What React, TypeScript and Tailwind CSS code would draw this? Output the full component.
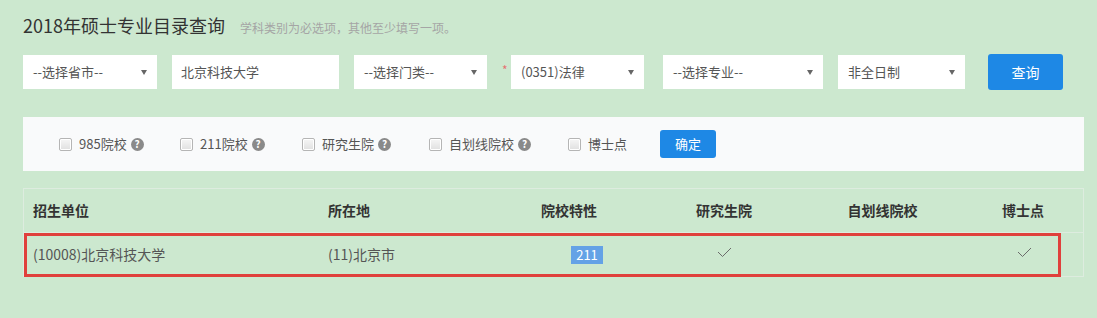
import React from "react";

const font = { fontFamily: '"Noto Sans CJK SC", "Noto Sans", sans-serif' };

function Arrow() {
  return (
    <svg width="6" height="5" viewBox="0 0 6 5" className="shrink-0">
      <path d="M0 0 L6 0 L3 5 Z" fill="#666" />
    </svg>
  );
}

function Select({ w, text, ml }: { w: string; text: string; ml?: string }) {
  return (
    <div
      className={`${w} ${ml ?? ""} h-[34px] bg-white flex items-center justify-between pl-[10px] pr-[10px] text-[13px] text-[#555]`}
    >
      <span>{text}</span>
      <Arrow />
    </div>
  );
}

function Check() {
  return (
    <span className="inline-block w-[13px] h-[13px] rounded-[2px] border border-[#b5b5b5] bg-gradient-to-b from-[#f6f6f6] to-[#e0e0e0] shadow-[inset_0_0_0_1px_#fff] shrink-0" />
  );
}

function Help() {
  return (
    <span className="ml-[4px] inline-flex w-[13px] h-[13px] rounded-full bg-[#8a8a8a] text-white text-[10px] font-bold items-center justify-center leading-none shrink-0">
      ?
    </span>
  );
}

function Opt({ w, label, help = true }: { w: string; label: string; help?: boolean }) {
  return (
    <div className={`${w} flex items-center shrink-0`}>
      <Check />
      <span className="ml-[7px] text-[13px] text-[#555]">{label}</span>
      {help && <Help />}
    </div>
  );
}

function Tick() {
  return (
    <svg width="15" height="11" viewBox="0 0 15 11" className="-mt-[4px]">
      <path d="M1 5 L5.5 9.5 L14 1" fill="none" stroke="#6b6b6b" strokeWidth="1" />
    </svg>
  );
}

export default function App() {
  return (
    <div style={font} className="min-h-[318px] w-full bg-[#cce8cf] pl-[23px] pt-[12px] pb-[20px]">
      <div className="flex items-baseline h-[26px]">
        <span className="text-[18px] leading-[26px] text-[#333]">2018年硕士专业目录查询</span>
        <span className="ml-[15px] text-[12px] text-[#a5a5a5]">学科类别为必选项，其他至少填写一项。</span>
      </div>

      <div className="mt-[16px] flex items-center h-[36px]">
        <Select w="w-[134px]" text="--选择省市--" />
        <div className="ml-[15px] w-[167px] h-[34px] bg-white flex items-center pl-[9px] text-[13px] text-[#555]">
          北京科技大学
        </div>
        <Select w="w-[133px]" ml="ml-[15px]" text="--选择门类--" />
        <span className="ml-[15px] w-[9px] self-start mt-[10px] text-[12px] text-[#e57373] leading-none">*</span>
        <Select w="w-[133px]" text="(0351)法律" />
        <Select w="w-[160px]" ml="ml-[19px]" text="--选择专业--" />
        <Select w="w-[127px]" ml="ml-[15px]" text="非全日制" />
        <button className="ml-[23px] w-[75px] h-[36px] rounded-[3px] bg-[#1e88e5] text-white text-[14px]">
          查询
        </button>
      </div>

      <div className="mt-[27px] w-[1061px] h-[54px] bg-[#f9fafb] flex items-center pl-[36px]">
        <Opt w="w-[121px]" label="985院校" />
        <Opt w="w-[122px]" label="211院校" />
        <Opt w="w-[127px]" label="研究生院" />
        <Opt w="w-[139px]" label="自划线院校" />
        <Opt w="w-[92px]" label="博士点" help={false} />
        <button className="w-[56px] h-[28px] rounded-[3px] bg-[#1e88e5] text-white text-[13px]">确定</button>
      </div>

      <div className="relative mt-[17px] w-[1061px] border border-[#ddecdf]">
        <div className="grid grid-cols-[294px_174px_154px_156px_161px_120px] h-[44px] items-center border-b border-[#ddecdf] text-[14px] font-bold text-[#333]">
          <div className="pl-[9px]">招生单位</div>
          <div className="pl-[10px]">所在地</div>
          <div className="text-center">院校特性</div>
          <div className="text-center">研究生院</div>
          <div className="text-center">自划线院校</div>
          <div className="text-center">博士点</div>
        </div>
        <div className="grid grid-cols-[294px_174px_154px_156px_161px_120px] h-[43px] items-center text-[14px] text-[#555]">
          <div className="pl-[9px]">(10008)北京科技大学</div>
          <div className="pl-[10px]">(11)北京市</div>
          <div className="flex justify-center pl-[36px]">
            <span className="bg-[#64a2e6] text-white text-[13px] leading-[18px] px-[5px]">211</span>
          </div>
          <div className="flex justify-center">
            <Tick />
          </div>
          <div />
          <div className="flex justify-center pl-[3px]">
            <Tick />
          </div>
        </div>
        <div className="absolute left-0 top-[44px] w-[1037px] h-[44px] border-[3px] border-[#e0403c] pointer-events-none" />
      </div>
    </div>
  );
}
